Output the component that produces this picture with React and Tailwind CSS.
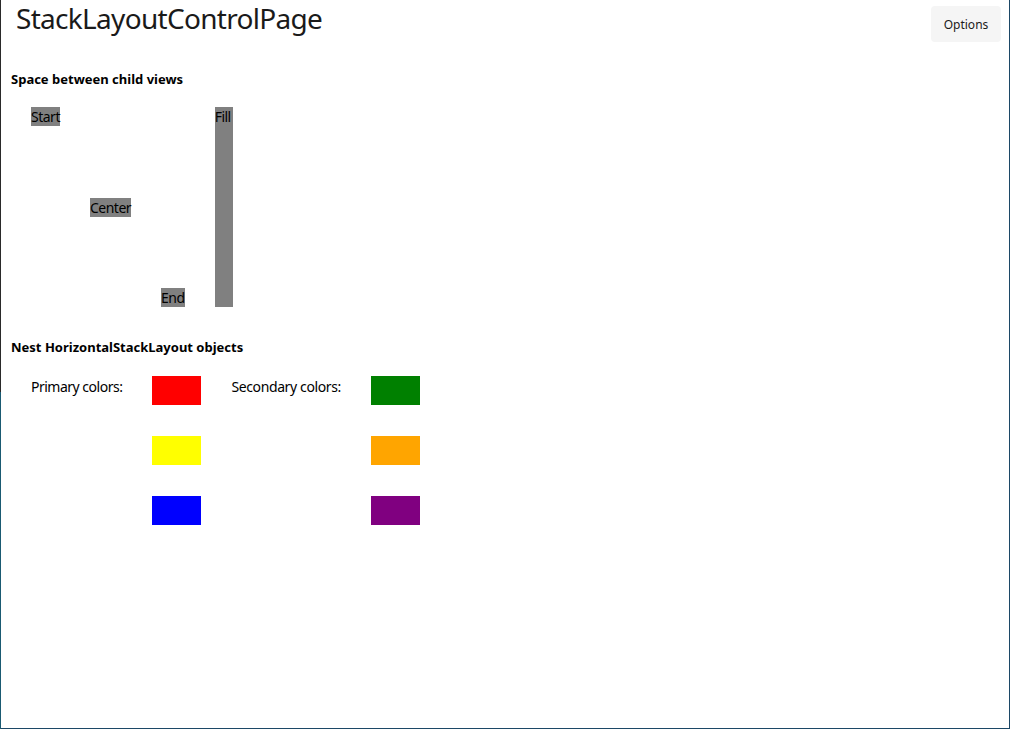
import React from "react";

const font = { fontFamily: '"Noto Sans", "Open Sans", sans-serif' };

function GrayLabel({ children, className = "" }) {
  return (
    <div className={"bg-[#808080] text-black text-[14px] leading-[19px] tracking-[-0.5px] " + className}>
      {children}
    </div>
  );
}

function Swatch({ color }) {
  return <div className={"w-[49px] h-[29px] " + color}></div>;
}

export default function App() {
  return (
    <div className="w-[1010px] h-[729px] flex bg-white overflow-hidden" style={font}>
      {/* left window edge */}
      <div className="w-px flex flex-col">
        <div className="h-[392px] bg-[#2a2a2a]"></div>
        <div className="flex-1 bg-[#1a5a72]"></div>
      </div>

      <div className="flex-1 flex flex-col border-r border-b border-[#1c4766]">
        {/* header */}
        <div className="flex justify-between items-start">
          <h1 className="pl-[15px] text-[28px] leading-[36px] tracking-[-0.7px] text-[#1a1a1a]">
            StackLayoutControlPage
          </h1>
          <button className="mt-[6px] mr-[8px] w-[70px] h-[36px] rounded bg-[#f5f5f5] text-[12px] pt-[2px] text-[#1a1a1a]">
            Options
          </button>
        </div>

        <div className="pl-[10px] pt-[28px]">
          <h2 className="text-[13px] font-bold text-black leading-[18px]">Space between child views</h2>

          <div className="flex gap-[30px] h-[200px] mt-[19px] pl-[20px]">
            <GrayLabel className="self-start">Start</GrayLabel>
            <GrayLabel className="self-center">Center</GrayLabel>
            <GrayLabel className="self-end">End</GrayLabel>
            <GrayLabel className="self-stretch w-[18px]">Fill</GrayLabel>
          </div>

          <h2 className="text-[13px] font-bold text-black leading-[18px] mt-[31px]">
            Nest HorizontalStackLayout objects
          </h2>

          <div className="flex gap-[30px] mt-[20px] pl-[20px]">
            <div className="flex gap-[30px]">
              <span className="text-[14px] leading-[19px] tracking-[-0.5px] text-black pt-[1px]">Primary colors:</span>
              <div className="flex flex-col gap-[31px]">
                <Swatch color="bg-[#ff0000]" />
                <Swatch color="bg-[#ffff00]" />
                <Swatch color="bg-[#0000ff]" />
              </div>
            </div>
            <div className="flex gap-[30px]">
              <span className="text-[14px] leading-[19px] tracking-[-0.38px] text-black pt-[1px]">Secondary colors:</span>
              <div className="flex flex-col gap-[31px]">
                <Swatch color="bg-[#008000]" />
                <Swatch color="bg-[#ffa500]" />
                <Swatch color="bg-[#800080]" />
              </div>
            </div>
          </div>
        </div>
      </div>
    </div>
  );
}
